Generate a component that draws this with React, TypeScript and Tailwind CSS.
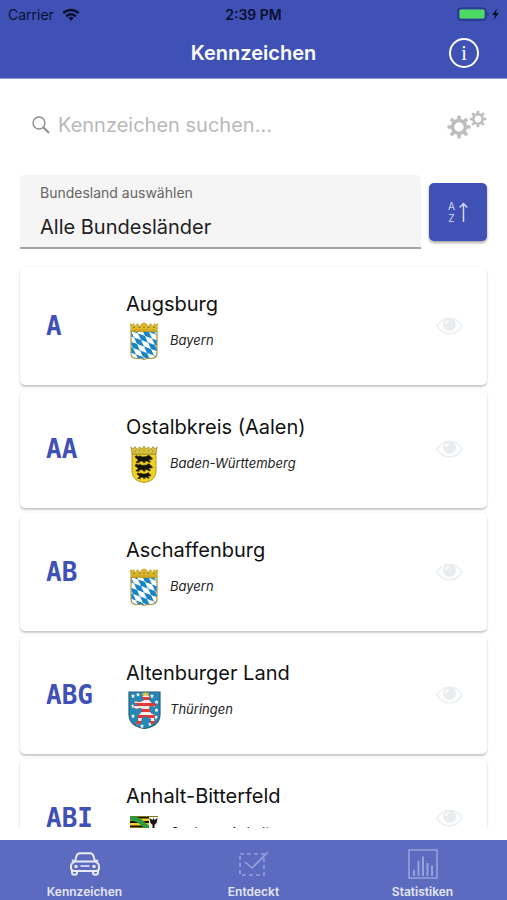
import { ReactNode, useState } from 'react'

type Plate = {
  code: string
  name: string
  state: string
  crest: ReactNode
}

function CrestBayern() {
  return (
    <svg viewBox="0 0 28 38" className="h-[38px] w-7" aria-hidden="true">
      <defs>
        <pattern
          id="lozenges"
          width="2"
          height="2"
          patternUnits="userSpaceOnUse"
          patternTransform="matrix(7 2.500 3 6.500 1 9)"
        >
          <rect width="2" height="2" fill="#1784c6" />
          <rect width="1" height="1" fill="#fff" />
          <rect x="1" y="1" width="1" height="1" fill="#fff" />
        </pattern>
      </defs>
      <path
        d="M1 9h26v22c0 4-2 5.500-6 5.500h-4.500L14 37.500l-2.500-1H7c-4 0-6-1.500-6-5.500z"
        fill="url(#lozenges)"
        stroke="#a8954a"
        strokeWidth="1.200"
      />
      <path
        d="M1 9.500.5 1.500 2 3l1.500-1.500L5 4.500 7.500 1.500 10 4.500 11.500 2 14 .8 16.500 2 18 4.500l2.500-3L23 4.500l1.500-3L26 3l1.500-1.500L27 9.500z"
        fill="#e0b92a"
        stroke="#b18d1c"
        strokeWidth=".6"
      />
      <path d="M3 5.500h2M8.500 5.500h2M13 5h2M17.500 5.500h2M23 5.500h2" stroke="#7f7b3c" />
      <path d="M2 8h24" stroke="#c99c1c" />
    </svg>
  )
}

function Lion({ y }: { y: number }) {
  return (
    <g transform={`translate(4 ${y})`}>
      <path
        d="M1 1.500 3 .5l1 1.300L6 .7l2 1.200 4.500-.3 1.500-1.300 2 .6.2 1 1.600.4-.8.8 1.700.6-1 .8-2.200-.1-.8 1.200 1.800 1-1 1-2.700-1.500-2.300-.1.9 1.400-1.800.4-1.300-1.700-2.400.1-1.300 1.600-2.600-.2.1-.9 1.200-.2.8-1.500-1.400-1.600-1.200-.6z"
        fill="#17140a"
        stroke="#17140a"
        strokeWidth=".5"
      />
      <path d="m17 3.500 1.500.3M4.500 8H6" stroke="#b4311f" strokeWidth=".6" />
    </g>
  )
}

function CrestBaden() {
  return (
    <svg viewBox="0 0 28 38" className="h-[38px] w-7" aria-hidden="true">
      <path
        d="M2 9h24v17c0 6-4 10.500-12 11.500C6 36.500 2 32 2 26z"
        fill="#f0d31e"
        stroke="#a18f2a"
        strokeWidth=".9"
      />
      <path
        d="M2 9 .8 2l2 2L5 1.500l2 3L9.500 2 12 4l2-3 2 3 2.500-2L21 4.500l2-3L25.200 4l2-2L26 9z"
        fill="#d9c03a"
        stroke="#8e8130"
        strokeWidth=".7"
      />
      <path d="M5 6h1M9 5.500h1M13.500 5h1M18 5.500h1M22 6h1" stroke="#8b7c27" />
      <Lion y={10} />
      <Lion y={18.500} />
      <g transform="translate(3 5) scale(.8)">
        <Lion y={28} />
      </g>
    </svg>
  )
}

function CrestThueringen() {
  const stars = [
    [5, 5],
    [10, 3.500],
    [24, 5],
    [28.500, 11],
    [28.500, 19],
    [28, 26],
    [22, 33],
    [14, 35],
    [5, 15],
    [5, 25],
  ]
  return (
    <svg viewBox="0 0 33 38" className="h-[38px] w-[33px]" aria-hidden="true">
      <defs>
        <pattern id="bars" width="4" height="6" patternUnits="userSpaceOnUse">
          <rect width="4" height="6" fill="#f7eeee" />
          <rect width="4" height="3" fill="#e23b35" />
        </pattern>
      </defs>
      <path
        d="M1 1h31v22c0 8-6 13-15.500 14.500C7 36 1 31 1 23z"
        fill="#2588b8"
        stroke="#2a6178"
        strokeWidth="1.200"
      />
      {stars.map(([x, y]) => (
        <path
          key={`${x}-${y}`}
          transform={`translate(${x} ${y})`}
          d="m0-2 .6 1.200L2-.6 1 .4 1.300 2 0 1.200-1.300 2-1 .4-2-.6l1.400-.2z"
          fill="#fff"
        />
      ))}
      <path
        d="m14 6 2-2 4 0 2 2-1 3 3 3 4 1-1 3-5-1-1 3 2 4 4 2-1 3 1 4-3 2-2-1 1-4-5-3-4 2-1 5-4 2-1-2 2-2 0-5 4-5-1-3-5 1-3-2 1-2 4 1 0-2-4-1 1-2 5 1 4-2z"
        fill="url(#bars)"
        stroke="#b23b3a"
        strokeWidth=".4"
      />
      <path d="m14.500 4.500-.5-3 2 1.300L17.500.8 19 2.800l2-1.300-.5 3z" fill="#f0c52d" />
    </svg>
  )
}

function CrestSachsenAnhalt() {
  return (
    <svg viewBox="0 0 28 34" className="h-[34px] w-7" aria-hidden="true">
      <path d="M0 0h28v20c0 8-5 12-14 14C5 32 0 28 0 20z" fill="#f4d12a" />
      <path d="M0 1.500h28M0 6h28M0 10.500h28M0 15h28" stroke="#14130a" strokeWidth="2.200" />
      <path d="M0 2c8 0 12 5 20 12" fill="none" stroke="#2f9a3c" strokeWidth="5" />
      <path d="M19 1h9v12h-9z" fill="#f5f5f0" />
      <path d="m19.500 2 3 2 1-2 1 2 3-2-1 5-2 2v3h-2V9l-2-2z" fill="#151515" />
      <path d="M0 17h28v3c0 8-5 12-14 14C5 32 0 28 0 20z" fill="#fff" />
      <path d="M4 29h20M6 25h16" stroke="#c93530" strokeWidth="2" />
      <path d="m8 24 2-4h8l2 4h-2l-2-2h-4l-2 2z" fill="#151515" />
    </svg>
  )
}

const plates: Plate[] = [
  { code: 'A', name: 'Augsburg', state: 'Bayern', crest: <CrestBayern /> },
  {
    code: 'AA',
    name: 'Ostalbkreis (Aalen)',
    state: 'Baden-Württemberg',
    crest: <CrestBaden />,
  },
  { code: 'AB', name: 'Aschaffenburg', state: 'Bayern', crest: <CrestBayern /> },
  {
    code: 'ABG',
    name: 'Altenburger Land',
    state: 'Thüringen',
    crest: <CrestThueringen />,
  },
  {
    code: 'ABI',
    name: 'Anhalt-Bitterfeld',
    state: 'Sachsen-Anhalt',
    crest: <CrestSachsenAnhalt />,
  },
]

const states = [
  'Alle Bundesländer',
  'Baden-Württemberg',
  'Bayern',
  'Sachsen-Anhalt',
  'Thüringen',
]

function StatusBar() {
  return (
    <div className="grid h-7 grid-cols-3 items-center px-2 text-[14px] text-[#0b1030]">
      <div className="flex items-center gap-2">
        <span>Carrier</span>
        <svg viewBox="0 0 18 13" className="h-[13px] w-[18px]" aria-hidden="true">
          <g fill="none" stroke="currentColor" strokeWidth="2.400">
            <path d="M1.200 5.200a11 11 0 0 1 15.600 0" />
            <path d="M4.200 8.300a6.800 6.800 0 0 1 9.600 0" />
          </g>
          <path d="M9 12.800 6.300 10a3.900 3.900 0 0 1 5.400 0z" fill="currentColor" />
        </svg>
      </div>
      <span className="text-center font-semibold">2:39 PM</span>
      <svg
        viewBox="0 0 44 14"
        className="h-3.5 w-11 justify-self-end"
        aria-hidden="true"
      >
        <rect x="3" y="1" width="28" height="12" rx="3" fill="none" stroke="#1d2a6b" />
        <rect x="4.500" y="2.500" width="25" height="9" rx="1.500" fill="#4cd964" />
        <path d="M32.500 5v4c1.500-.6 1.500-3.400 0-4z" fill="#1d2a6b" />
        <path d="m42 1.500-5 6.500h3l-1.500 5 5.500-7h-3z" fill="currentColor" />
      </svg>
    </div>
  )
}

function Gear({ x, y, scale }: { x: number; y: number; scale: number }) {
  return (
    <g transform={`translate(${x} ${y}) scale(${scale})`}>
      <circle r="6.500" fill="none" stroke="#bdbdbd" strokeWidth="3.600" />
      {[0, 45, 90, 135, 180, 225, 270, 315].map((angle) => (
        <rect
          key={angle}
          x="-1.800"
          y="-11.500"
          width="3.600"
          height="4.500"
          rx="1"
          fill="#bdbdbd"
          transform={`rotate(${angle})`}
        />
      ))}
    </g>
  )
}

function Eye() {
  return (
    <svg viewBox="0 0 27 18" className="h-[18px] w-[27px]" aria-hidden="true">
      <path
        d="M1 9C4 4 8.500 1.200 13.500 1.200S23 4 26 9c-3 5-7.500 7.800-12.500 7.800S4 14 1 9z"
        fill="none"
        stroke="#eceff1"
        strokeWidth="1.600"
      />
      <circle cx="13.500" cy="7.500" r="6.500" fill="#e9edef" />
      <path d="M10 7c0-1.800 1-3 2.800-3.200" fill="none" stroke="#fff" strokeWidth="1.400" />
    </svg>
  )
}

function PlateCard({ plate }: { plate: Plate }) {
  return (
    <li className="flex items-center rounded-[5px] bg-white py-[25px] pl-[26px] pr-6 shadow-[0_2px_2px_rgba(0,0,0,0.2),0_0_2px_rgba(0,0,0,0.08)]">
      <span className="w-20 shrink-0 font-['DejaVu_Sans_Mono',monospace] text-[26px] font-bold text-[#3f51b5]">
        {plate.code}
      </span>
      <div className="min-w-0 flex-1">
        <h2 className="truncate text-[20px] leading-6 text-[#111]">{plate.name}</h2>
        <div className="mt-1.5 flex h-[38px] items-center gap-2">
          <span className="flex w-9 shrink-0 justify-center">{plate.crest}</span>
          <span className="text-[13px] italic text-[#222]">{plate.state}</span>
        </div>
      </div>
      <button type="button" aria-label={`${plate.name} als entdeckt markieren`}>
        <Eye />
      </button>
    </li>
  )
}

function CarIcon() {
  return (
    <svg viewBox="0 0 30 24" className="h-6 w-[30px]" fill="none" stroke="currentColor" strokeWidth="2" strokeLinejoin="round" aria-hidden="true">
      <path d="M5 9.500 6.500 4C7 2.200 8 1.200 10 1.200h10c2 0 3 1 3.500 2.800L25 9.500" />
      <path d="M5 9.500h20c2.500.8 4 2.700 4 5v1.500c0 1.800-1 3-3 3H4c-2 0-3-1.200-3-3v-1.500c0-2.300 1.500-4.200 4-5zM4.500 9.500 2 8M25.500 9.500 28 8" />
      <path d="M2 18v2.500C2 22 3 22.800 4.500 22.800S7 22 7 20.500V19M23 19v1.500c0 1.500 1 2.300 2.500 2.300S28 22 28 20.500V18" />
      <path d="M10.500 14h9" strokeWidth="1.600" />
      <circle cx="6" cy="14.500" r=".8" />
      <circle cx="24" cy="14.500" r=".8" />
    </svg>
  )
}

function CheckIcon() {
  return (
    <svg viewBox="0 0 30 28" className="h-7 w-[30px]" fill="none" stroke="currentColor" strokeWidth="1.600" aria-hidden="true">
      <path d="M1 4h24v21H1z" strokeDasharray="4 3" />
      <path d="m6 12 7 6L29 2" />
    </svg>
  )
}

function ChartIcon() {
  return (
    <svg viewBox="0 0 30 30" className="size-[30px]" fill="none" stroke="currentColor" strokeWidth="1.600" aria-hidden="true">
      <path d="M1 1h28v28H1z" />
      <path d="M6 27v-6M10.500 27V12M15 27V7.500M19.500 27V14M24 27V16.500" strokeWidth="2" />
    </svg>
  )
}

const tabs = [
  { label: 'Kennzeichen', icon: <CarIcon /> },
  { label: 'Entdeckt', icon: <CheckIcon /> },
  { label: 'Statistiken', icon: <ChartIcon /> },
]

export default function App() {
  const [search, setSearch] = useState('')
  const [state, setState] = useState(states[0])
  const [descending, setDescending] = useState(false)
  const [activeTab, setActiveTab] = useState('Kennzeichen')

  const visible = plates.filter(
    (plate) =>
      (state === states[0] || plate.state === state) &&
      `${plate.code} ${plate.name}`.toLowerCase().includes(search.toLowerCase())
  )
  if (descending) visible.reverse()

  return (
    <div className="flex h-screen flex-col bg-white font-['Inter',sans-serif]">
      <header className="shrink-0 border-b border-[#8f9bd8] bg-[#3f51b5]">
        <StatusBar />
        <div className="grid h-[50px] grid-cols-[1fr_auto_1fr] items-center px-7">
          <h1 className="col-start-2 text-[20px] font-semibold text-white">
            Kennzeichen
          </h1>
          <button
            type="button"
            aria-label="Info"
            className="flex size-[30px] items-center justify-center justify-self-end rounded-full border-2 border-white font-['Liberation_Serif',serif] text-[20px] leading-none text-white"
          >
            i
          </button>
        </div>
      </header>

      <main className="mb-3 min-h-0 flex-1 overflow-hidden px-5">
        <div className="mt-[21px] flex h-[50px] items-center">
          <label className="flex min-w-0 flex-1 items-center gap-2 pl-3">
            <svg viewBox="0 0 18 18" className="size-[18px] shrink-0" fill="none" stroke="#8e8e8e" aria-hidden="true">
              <circle cx="7" cy="7" r="6" strokeWidth="1.400" />
              <path d="m11.500 11.500 5.500 5.500" strokeWidth="2" />
            </svg>
            <input
              type="search"
              aria-label="Kennzeichen suchen"
              placeholder="Kennzeichen suchen..."
              value={search}
              onChange={(e) => setSearch(e.target.value)}
              className="min-w-0 flex-1 text-[20px] outline-none placeholder:text-[#b9b9b9]"
            />
          </label>
          <button type="button" aria-label="Einstellungen">
            <svg viewBox="0 0 40 30" className="h-[30px] w-10" aria-hidden="true">
              <Gear x={12} y={17} scale={1} />
              <Gear x={31} y={9} scale={0.72} />
            </svg>
          </button>
        </div>

        <div className="mt-[25px] flex items-center gap-2">
          <div className="relative min-w-0 flex-1">
            <label
              htmlFor="state"
              className="absolute left-5 top-2 text-[14px] leading-5 text-[#666]"
            >
              Bundesland auswählen
            </label>
            <select
              id="state"
              value={state}
              onChange={(e) => setState(e.target.value)}
              className="block h-[74px] w-full appearance-none rounded-t-[5px] border-b-2 border-[#a3a3a3] bg-[#f5f5f5] px-5 pt-8 text-[20px] text-[#222] outline-none"
            >
              {states.map((name) => (
                <option key={name}>{name}</option>
              ))}
            </select>
          </div>
          <button
            type="button"
            aria-label="Sortierung umkehren"
            onClick={() => setDescending(!descending)}
            className="flex size-[58px] shrink-0 items-center justify-center gap-1 rounded-[5px] bg-[#3f51b5] text-[#d5daf2] shadow-[0_2px_3px_rgba(0,0,0,0.35)]"
          >
            <span className="flex flex-col text-[10px] leading-3">
              <span>A</span>
              <span>Z</span>
            </span>
            <svg viewBox="0 0 9 21" className="h-[21px] w-[9px]" fill="none" stroke="currentColor" strokeWidth="1.500" aria-hidden="true">
              <path d="M4.500 20V1.500M.7 5.500l3.800-4 3.800 4" />
            </svg>
          </button>
        </div>

        <ul className="mt-[18px] flex flex-col gap-[5px]">
          {visible.map((plate) => (
            <PlateCard key={plate.code} plate={plate} />
          ))}
        </ul>
      </main>

      <nav className="grid h-[60px] shrink-0 grid-cols-3 bg-[#5c6bc0]">
        {tabs.map((tab) => (
          <button
            key={tab.label}
            type="button"
            onClick={() => setActiveTab(tab.label)}
            className="flex flex-col items-center pt-2 text-[12px] font-semibold leading-4 text-[#e3e6f5]"
          >
            <span
              className={`flex h-8 items-center ${
                activeTab === tab.label ? 'text-[#e8eaf6]' : 'text-[#96a1da]'
              }`}
            >
              {tab.icon}
            </span>
            <span className="mt-1">{tab.label}</span>
          </button>
        ))}
      </nav>
    </div>
  )
}
